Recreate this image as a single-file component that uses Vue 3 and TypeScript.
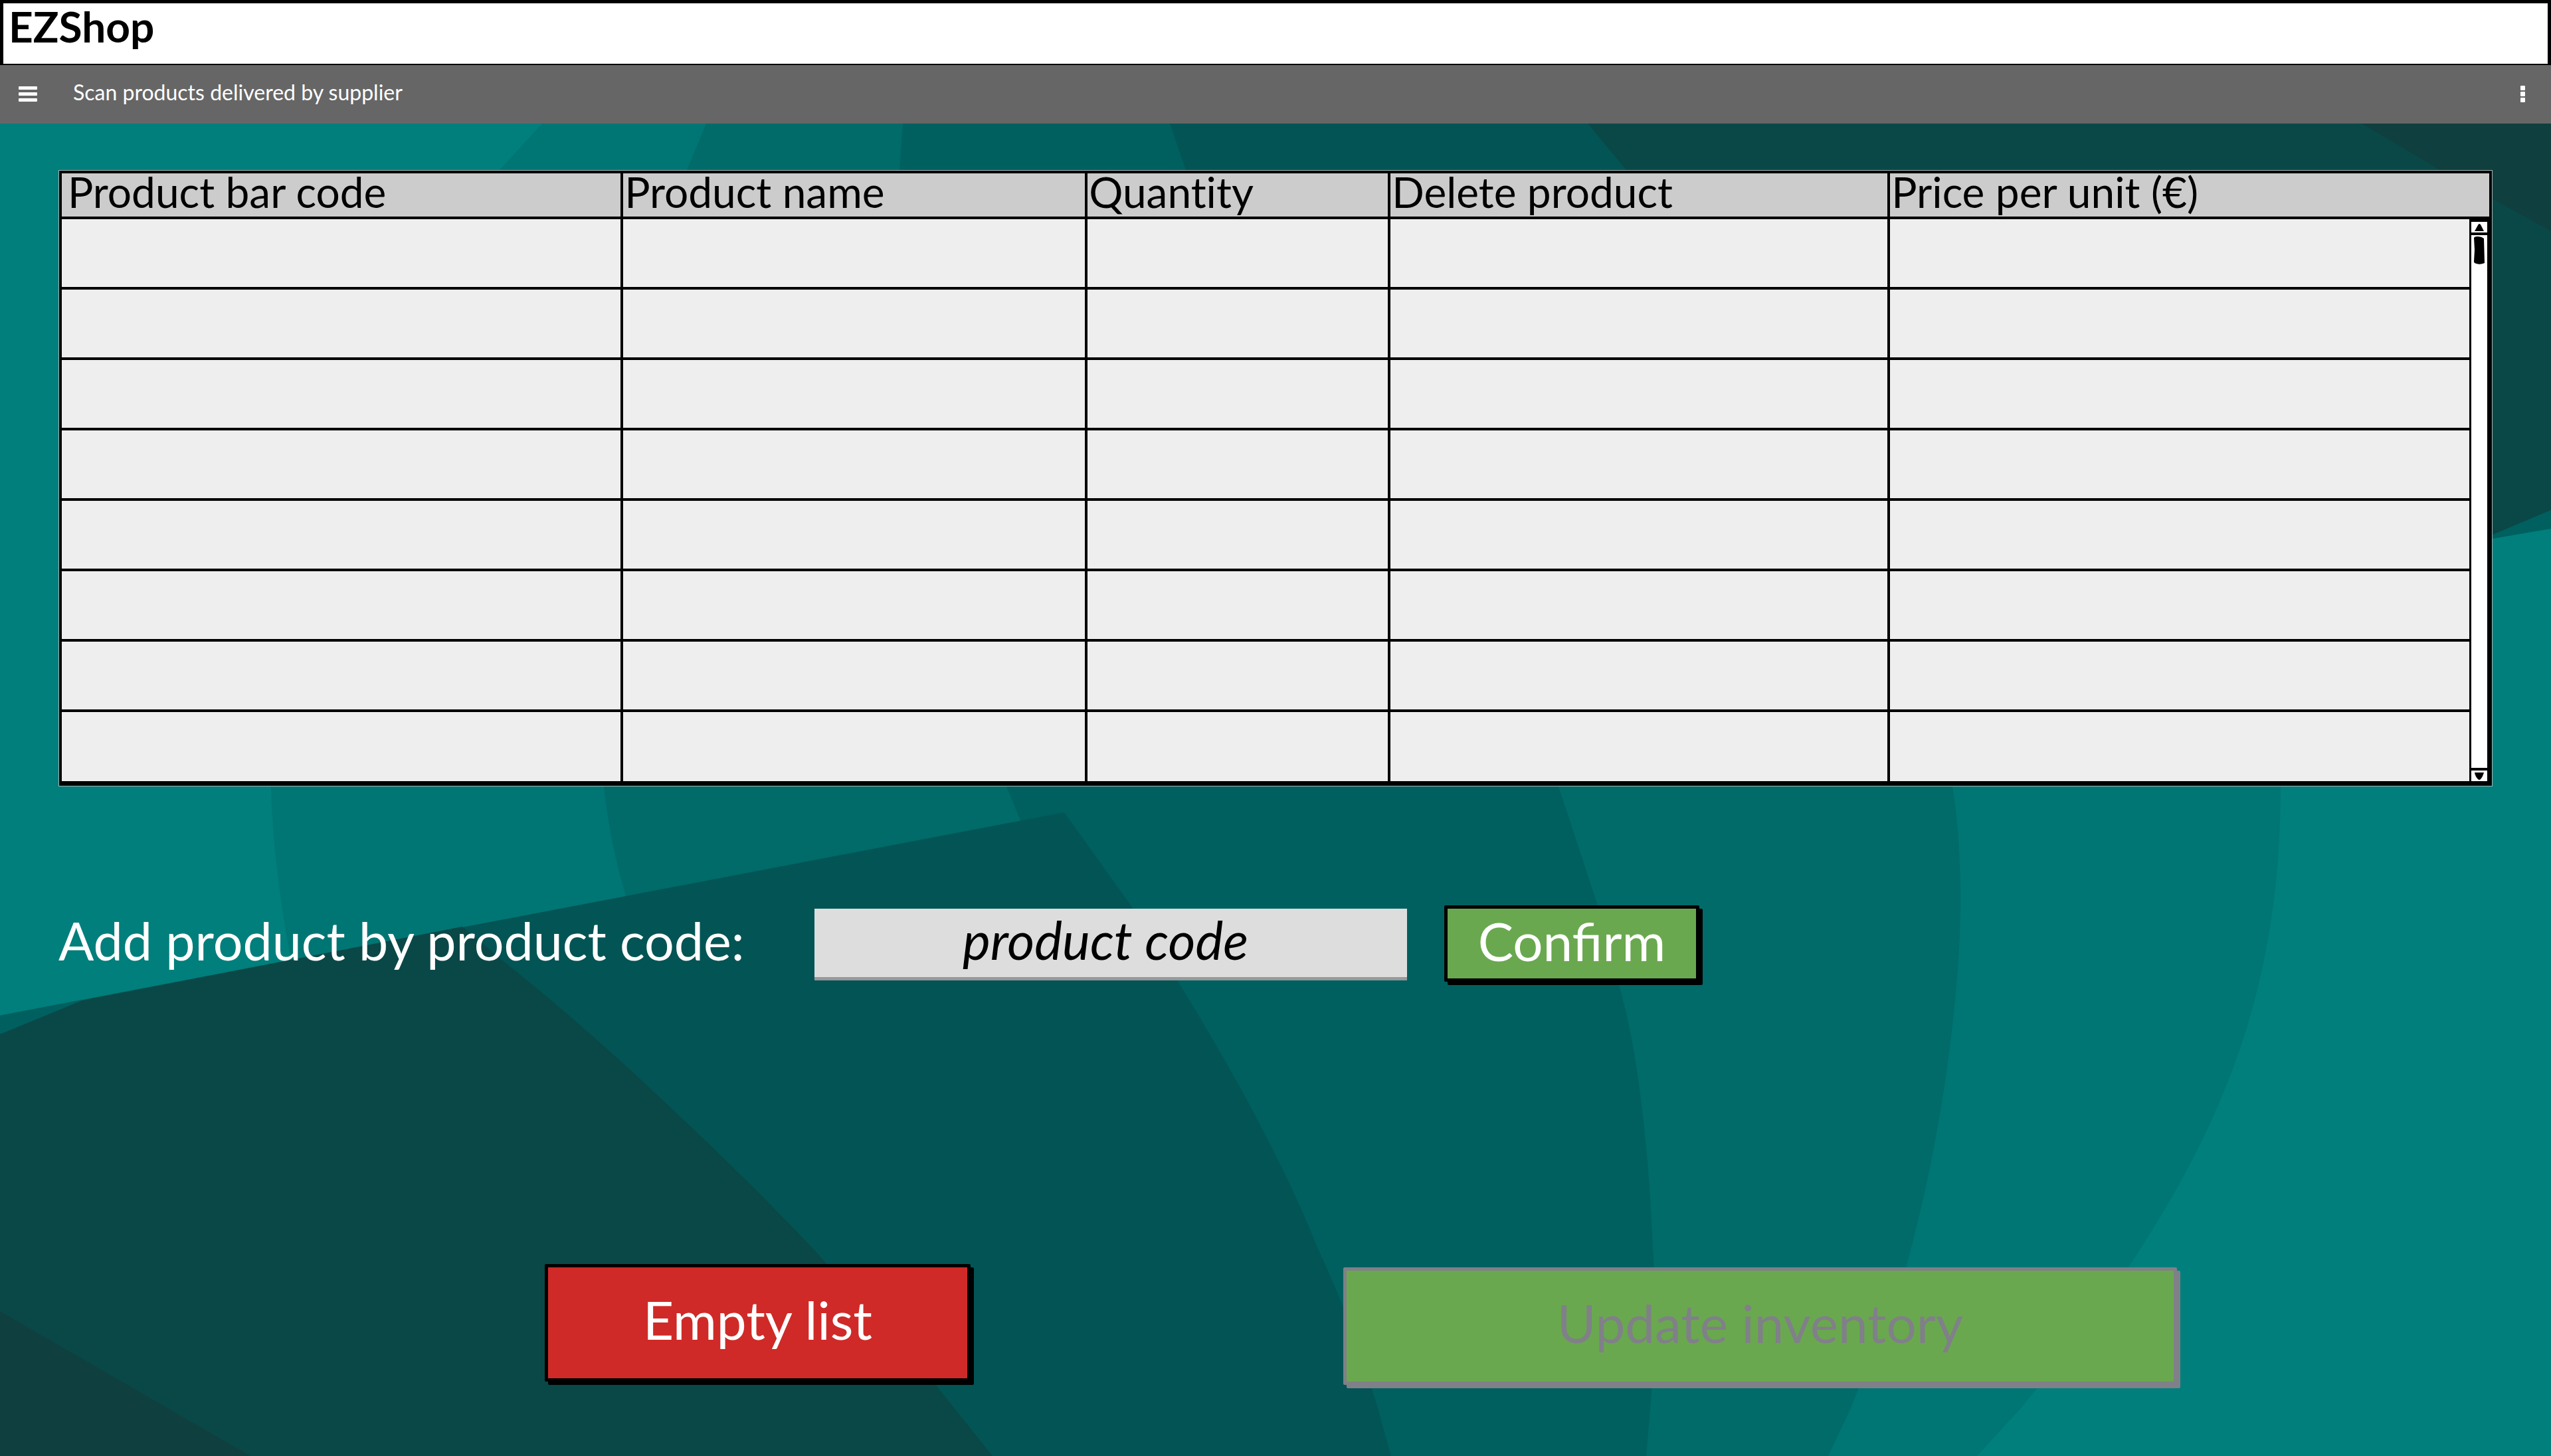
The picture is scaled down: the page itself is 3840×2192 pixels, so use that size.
<script setup lang="ts">
import { ref } from 'vue'

interface Column {
  key: string
  label: string
}

const columns: Column[] = [
  { key: 'barcode', label: 'Product bar code' },
  { key: 'name', label: 'Product name' },
  { key: 'quantity', label: 'Quantity' },
  { key: 'delete', label: 'Delete product' },
  { key: 'price', label: 'Price per unit (€)' },
]

const rowCount = 8
const productCode = ref<string>('')
</script>

<template>
  <div class="page">
    <header class="brand"><h1>EZShop</h1></header>

    <nav class="toolbar">
      <button class="icon-button" type="button" aria-label="Menu">
        <svg width="28" height="24" viewBox="0 0 28 24" fill="#fff" aria-hidden="true">
          <rect width="28" height="5" rx="1" />
          <rect y="9" width="28" height="5" rx="1" />
          <rect y="18" width="28" height="5" rx="1" />
        </svg>
      </button>
      <span class="toolbar-title">Scan products delivered by supplier</span>
      <button class="icon-button" type="button" aria-label="More options">
        <svg width="7" height="26" viewBox="0 0 7 26" fill="#fff" aria-hidden="true">
          <rect width="7" height="7" rx="1" />
          <rect y="9" width="7" height="7" rx="1" />
          <rect y="18" width="7" height="7" rx="1" />
        </svg>
      </button>
    </nav>

    <main class="content">
      <svg class="backdrop" viewBox="0 186 3840 2006" preserveAspectRatio="none" aria-hidden="true">
        <rect y="186" width="3840" height="2006" fill="#007f7c" />
        <path fill="#007674" d="M816 186L752 256C500 560 400 880 408 1184C410 1270 422 1360 437 1440L1500 2192H2976L3042 2120L3068 2088Q3150 1995 3222 1880C3350 1680 3433 1480 3433 1184L3300 186Z" />
        <path fill="#006b69" d="M1063 186L1034 256C930 560 885 880 909 1184Q918 1270 942 1348L1500 2192H2752L2786 2120L2869 1908C2930 1690 2958 1440 2950 1300Q2948 1240 2939 1184L2700 186Z" />
        <path fill="#00605f" d="M1359 186L1354 256C1345 600 1410 900 1515 1184L1536 1235L1800 2192H2478L2484 2120C2494 2000 2492 1940 2488 1880C2480 1690 2460 1560 2436 1480L2405 1363L2346 1184C2200 800 2050 500 1950 186Z" />
        <path fill="#035455" d="M1761 186L1785 256C1880 500 2100 800 2700 900L3840 720V186Z" />
        <path fill="#00605f" d="M3600 720L3840 700V796L3752 811L3600 835Z" />
        <path fill="#0a4848" d="M2390 186L2448 256C2640 600 3000 800 3500 850Q3640 850 3752 805L3840 768V186Z" />
        <path fill="#103f3f" d="M3555 186L3673 256L3840 348V186Z" />
        <path fill="#035455" d="M0 1529L1602 1223L1705 1367L1793 1510Q1920 1720 1984 1880Q2040 2000 2074 2120L2094 2192H0Z" />
        <path fill="#00605f" d="M0 1529L124 1505V1560H0Z" />
        <path fill="#0a4848" d="M0 1557L124 1506L696 1395L758 1447Q880 1545 991 1650Q1120 1770 1224 1880Q1320 1985 1407 2083L1494 2192H0Z" />
        <path fill="#103f3f" d="M0 1974L377 2192H0Z" />
      </svg>

      <section class="product-panel">
        <table>
          <colgroup>
            <col v-for="column in columns" :key="column.key" :class="'col-' + column.key" />
          </colgroup>
          <thead>
            <tr>
              <th v-for="column in columns" :key="column.key" scope="col">{{ column.label }}</th>
            </tr>
          </thead>
          <tbody>
            <tr v-for="row in rowCount" :key="row">
              <td v-for="column in columns" :key="column.key"></td>
            </tr>
          </tbody>
        </table>
        <div class="scrollbar">
          <button class="scroll-step up" type="button" aria-label="Scroll up">
            <svg width="14" height="11" viewBox="0 0 14 11" aria-hidden="true">
              <path d="M7 0Q9 0 10 3L14 11H0L5 2Q6 0 7 0Z" />
            </svg>
          </button>
          <div class="scroll-track">
            <svg width="16" height="42" viewBox="0 0 16 42" aria-hidden="true">
              <path d="M0 2Q1 0 5 0Q11 0 15 3L16 40Q9 43 4 41Q0 40 0 38L1 20Z" />
            </svg>
          </div>
          <button class="scroll-step down" type="button" aria-label="Scroll down">
            <svg width="14" height="11" viewBox="0 0 14 11" aria-hidden="true">
              <path d="M0 0H14Q12 7 9 10Q7 12 5 10Q1 6 0 0Z" />
            </svg>
          </button>
        </div>
      </section>

      <form class="add-form" @submit.prevent>
        <label for="product-code">Add product by product code:</label>
        <input id="product-code" v-model="productCode" type="text" placeholder="product code" />
        <button class="sketch-button confirm" type="submit">Confirm</button>
      </form>

      <div class="actions">
        <button class="sketch-button empty" type="button">Empty list</button>
        <button class="sketch-button update" type="button" disabled>Update inventory</button>
      </div>
    </main>
  </div>
</template>

<style>
body {
  margin: 0;
}
</style>

<style scoped>
.page {
  display: flex;
  flex-direction: column;
  min-height: 100vh;
  font-family: Lato, 'Liberation Sans', sans-serif;
  color: #000;
}

.page * {
  box-sizing: border-box;
}

button,
input {
  margin: 0;
  font: inherit;
  color: inherit;
}

.brand {
  height: 98px;
  padding-left: 8px;
  background: #fff;
  border: 5px solid #000;
  border-bottom-width: 2px;
}

h1 {
  margin: 0;
  font-size: 64px;
  line-height: 70px;
  font-weight: 700;
}

.toolbar {
  display: flex;
  align-items: center;
  height: 88px;
  padding: 0 39px 0 28px;
  background: #666;
  color: #fff;
}

.toolbar-title {
  flex: 1;
  margin-left: 54px;
  padding-bottom: 6px;
  font-size: 32px;
  line-height: 40px;
}

.icon-button {
  display: flex;
  padding: 0;
  background: none;
  border: 0;
}

.content {
  position: relative;
  isolation: isolate;
  flex: 1;
  padding: 70px 88px 96px;
}

.backdrop {
  position: absolute;
  z-index: -1;
  inset: 0;
  width: 100%;
  height: 100%;
}

.product-panel {
  position: relative;
  border: solid #000;
  border-width: 4px 4px 7px;
  margin: 1px;
  outline: 1px solid #a9b5b5;
  background: #eee;
}

table {
  width: 100%;
  table-layout: fixed;
  border-collapse: separate;
  border-spacing: 0;
}

.col-barcode {
  width: 23.13%;
}

.col-name {
  width: 19.13%;
}

.col-quantity {
  width: 12.48%;
}

.col-delete {
  width: 20.58%;
}

th {
  height: 69px;
  padding: 0 0 10px 2px;
  background: #ccc;
  border-bottom: 4px solid #000;
  font-size: 64px;
  line-height: 55px;
  font-weight: 400;
  font-variant-ligatures: none;
  text-align: left;
  white-space: nowrap;
}

th:first-child {
  padding-left: 9px;
}

td {
  height: 106px;
  padding: 0;
  border-bottom: 4px solid #000;
}

tbody tr:last-child td {
  height: 104px;
  border-bottom: 0;
}

th:not(:last-child),
td:not(:last-child) {
  border-right: 4px solid #000;
}

.scrollbar {
  position: absolute;
  top: 69px;
  right: 0;
  bottom: 0;
  display: flex;
  flex-direction: column;
  width: 30px;
  border: solid #000;
  border-width: 4px 3px 0;
  background: #fff;
}

.scroll-step {
  display: flex;
  align-items: center;
  justify-content: center;
  height: 20px;
  padding: 0;
  background: #fff;
  border: 0 solid #000;
}

.up {
  border-bottom-width: 4px;
}

.down {
  border-top-width: 4px;
}

.scroll-track {
  flex: 1;
  padding: 2px 4px;
}

.add-form {
  display: grid;
  grid-template-columns: 1138fr 892fr 56fr 384fr 1194fr;
  align-items: start;
  margin-top: 180px;
  font-size: 80px;
  line-height: 96px;
}

label {
  padding-top: 5px;
  color: #fff;
  font-size: 79px;
  white-space: nowrap;
}

input {
  min-width: 0;
  height: 108px;
  margin-top: 5px;
  padding: 0 16px 11px 0;
  background: #ddd;
  border: 0;
  border-bottom: 5px solid #999;
  font-size: 79px;
  font-style: italic;
  text-align: center;
}

input::placeholder {
  color: #000;
  opacity: 1;
}

.sketch-button {
  min-width: 0;
  height: 177px;
  padding: 0 0 12px;
  border: 5px solid #000;
  border-radius: 2px;
  box-shadow: 5px 5px 0 #000;
  color: #fff;
  white-space: nowrap;
}

.confirm {
  grid-column: 4;
  height: 115px;
  background: #6aa84f;
}

.actions {
  display: grid;
  grid-template-columns: 732fr 641fr 561fr 1255fr 475fr;
  align-items: start;
  margin-top: 425px;
  font-size: 80px;
  line-height: 96px;
}

.empty {
  grid-column: 2;
  background: #cf2a27;
}

.update {
  grid-column: 4;
  margin-top: 5px;
  background: #6aa84f;
  border-color: #808088;
  box-shadow: 5px 5px 0 #808088;
  color: #808088;
}
</style>
